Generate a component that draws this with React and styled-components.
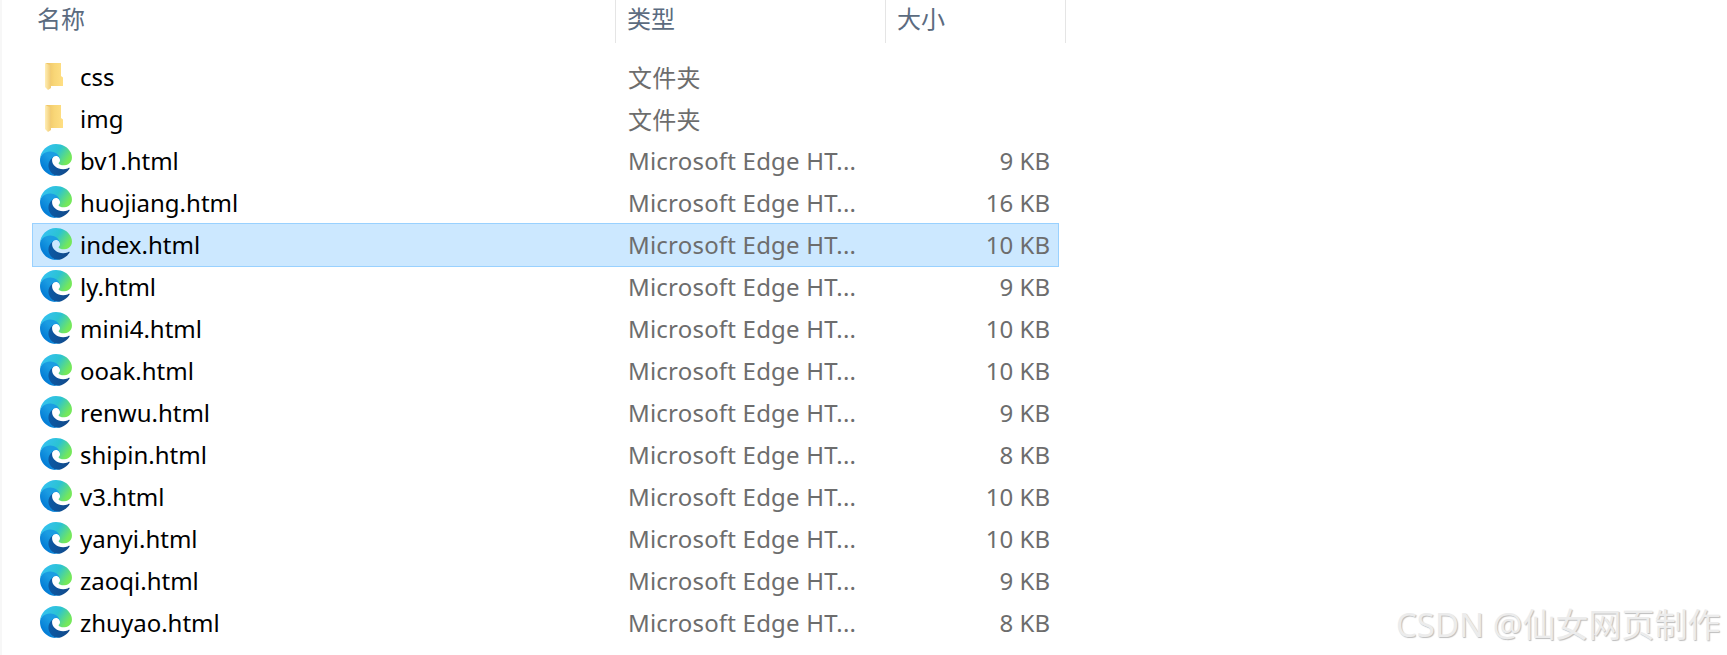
import React from 'react';
import styled, { createGlobalStyle } from 'styled-components';

const GlobalStyle = createGlobalStyle`
  html, body {
    margin: 0;
    padding: 0;
    background: #fff;
  }
  body {
    font-family: "Noto Sans", "Noto Sans CJK SC", sans-serif;
    overflow: hidden;
  }
`;

const files = [
  { name: 'css', type: '文件夹', folder: true },
  { name: 'img', type: '文件夹', folder: true },
  { name: 'bv1.html', size: '9 KB' },
  { name: 'huojiang.html', size: '16 KB' },
  { name: 'index.html', size: '10 KB', selected: true },
  { name: 'ly.html', size: '9 KB' },
  { name: 'mini4.html', size: '10 KB' },
  { name: 'ooak.html', size: '10 KB' },
  { name: 'renwu.html', size: '9 KB' },
  { name: 'shipin.html', size: '8 KB' },
  { name: 'v3.html', size: '10 KB' },
  { name: 'yanyi.html', size: '10 KB' },
  { name: 'zaoqi.html', size: '9 KB' },
  { name: 'zhuyao.html', size: '8 KB' },
];

function FolderIcon({ id }) {
  return (
    <svg width="32" height="32" viewBox="0 0 32 32">
      <defs>
        <linearGradient id={`${id}back`} x1="0" y1="0" x2="1" y2="0">
          <stop offset="0" stopColor="#eec264" />
          <stop offset="0.5" stopColor="#f8d677" />
          <stop offset="1" stopColor="#ffdf84" />
        </linearGradient>
        <linearGradient id={`${id}flap`} x1="0" y1="0" x2="1" y2="0">
          <stop offset="0" stopColor="#ffeeb4" />
          <stop offset="1" stopColor="#f0c970" />
        </linearGradient>
      </defs>
      <path d="M6 3h15v13l2 1.500V26H11z" fill={`url(#${id}back)`} />
      <path d="M5 3l6 2.500V28l-3 2-3-3z" fill={`url(#${id}flap)`} />
    </svg>
  );
}

function EdgeIcon({ id }) {
  return (
    <svg width="32" height="32" viewBox="0 0 256 256">
      <defs>
        <linearGradient id={`${id}a`} x1="0.1" y1="0.6" x2="0.9" y2="0.6">
          <stop offset="0" stopColor="#0c59a4" />
          <stop offset="1" stopColor="#114a8b" />
        </linearGradient>
        <linearGradient id={`${id}b`} x1="0.6" y1="0.4" x2="0.1" y2="1">
          <stop offset="0" stopColor="#1b9de2" />
          <stop offset="0.6" stopColor="#0680d7" />
          <stop offset="1" stopColor="#0078d4" />
        </linearGradient>
        <linearGradient id={`${id}c`} x1="0.1" y1="0.2" x2="0.95" y2="0.6">
          <stop offset="0" stopColor="#35c1f1" />
          <stop offset="0.5" stopColor="#2bc3d2" />
          <stop offset="1" stopColor="#75e85a" />
        </linearGradient>
      </defs>
      <path
        fill={`url(#${id}a)`}
        d="M231.34 190.6c-3.4 1.8-6.9 3.4-10.5 4.7-11.500 4.3-23.600 6.500-35.900 6.500-47.300 0-88.500-32.500-88.500-74.300.1-11.400 6.400-21.900 16.400-27.300-42.800 1.800-53.800 46.400-53.800 72.500 0 73.900 68.100 81.400 82.800 81.400 7.900 0 19.800-2.300 27-4.600l1.300-.4c27.600-9.500 51-28.100 66.600-52.800 1.200-1.900.6-4.300-1.200-5.500-1.200-.8-2.600-.8-3.800-.2z"
      />
      <path
        fill={`url(#${id}b)`}
        d="M105.730 241.400c-8.900-5.500-16.600-12.800-22.700-21.300-26.300-36-18.400-86.500 17.600-112.800 3.800-2.700 7.700-5.200 11.900-7.200 3.100-1.500 8.400-4.100 15.500-4 10.100.1 19.600 4.900 25.700 13 4 5.400 6.300 11.900 6.400 18.700 0-.2 24.500-79.600-80-79.600-43.900 0-80 41.700-80 78.200-.2 19.300 4 38.500 12.100 56 27.600 58.800 94.800 87.600 156.400 67.100-21.100 6.600-44.300 3.700-62.900-8.100z"
      />
      <path
        fill={`url(#${id}c)`}
        d="M152.330 148.800c-.8 1-3.300 2.500-3.300 5.700 0 2.600 1.700 5.100 4.700 7.200 14.400 10 41.500 8.700 41.600 8.700 10.700 0 21.100-2.900 30.200-8.300 18.600-10.900 30.100-30.800 30.100-52.400.3-22.400-8-37.300-11.300-43.900C223.130 24.700 178.430 0 127.930 0 57.930 0 1 56.200 0 126.200c.5-36.500 36.800-66 80-66 3.500 0 23.500.3 42 10.100 16.300 8.600 24.900 18.900 30.800 29.200 6.200 10.700 7.300 24.100 7.300 29.500 0 5.300-2.700 13.200-7.800 19.800z"
      />
    </svg>
  );
}

export default function App() {
  return (
    <>
      <GlobalStyle />
      <Explorer>
        <Header>
          <HeaderCell $width={614} $pad={35}>名称</HeaderCell>
          <HeaderCell $width={270} $pad={11}>类型</HeaderCell>
          <HeaderCell $width={180} $pad={11}>大小</HeaderCell>
        </Header>
        <FileList>
          {files.map((file) => (
            <Row key={file.name} $selected={file.selected}>
              <IconSlot>
                {file.folder ? <FolderIcon id={file.name} /> : <EdgeIcon id={file.name.replace('.', '')} />}
              </IconSlot>
              <FileName>{file.name}</FileName>
              <FileType>{file.type || 'Microsoft Edge HT...'}</FileType>
              <FileSize>{file.size}</FileSize>
            </Row>
          ))}
        </FileList>
      </Explorer>
      <Watermark>CSDN @仙女网页制作</Watermark>
    </>
  );
}

const Explorer = styled.div`
  width: 1727px;
  height: 655px;
  background: #fff;
  border-left: 2px solid #f7f7f7;
  box-sizing: border-box;
`;

const Header = styled.div`
  display: flex;
  height: 43px;
`;

const HeaderCell = styled.div`
  width: ${(p) => p.$width}px;
  box-sizing: border-box;
  padding-left: ${(p) => p.$pad}px;
  border-right: 1px solid #e5e5e5;
  font-size: 24px;
  line-height: 37px;
  color: #5b6b80;
`;

const FileList = styled.div`
  margin: 13px 0 0 31px;
  width: 1025px;
`;

const Row = styled.div`
  display: flex;
  align-items: center;
  height: 42px;
  padding-bottom: 2px;
  box-sizing: border-box;
  background: ${(p) => (p.$selected ? '#cce8ff' : 'transparent')};
  outline: ${(p) => (p.$selected ? '1px solid #99d1ff' : 'none')};
`;

const IconSlot = styled.div`
  width: 32px;
  height: 32px;
  margin-left: 7px;
  flex: none;
`;

const FileName = styled.div`
  width: 548px;
  margin-left: 8px;
  flex: none;
  font-size: 24px;
  color: #000;
`;

const FileType = styled.div`
  width: 340px;
  flex: none;
  font-size: 24px;
  letter-spacing: 0.2px;
  color: #6d6d6d;
  white-space: nowrap;
`;

const FileSize = styled.div`
  width: 82px;
  flex: none;
  text-align: right;
  font-size: 24px;
  color: #6d6d6d;
  white-space: nowrap;
`;

const Watermark = styled.div`
  position: absolute;
  left: 1396px;
  top: 604px;
  font-size: 33px;
  line-height: 42px;
  color: #ececec;
  text-shadow: 1px 1px 1px #bdbdbd;
  white-space: nowrap;
`;
